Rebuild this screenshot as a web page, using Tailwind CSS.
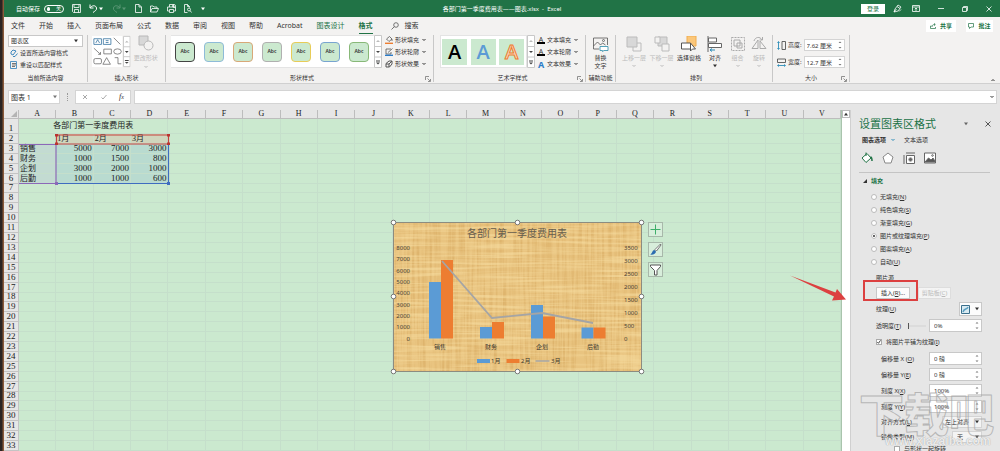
<!DOCTYPE html>
<html lang="zh-CN">
<head>
<meta charset="utf-8">
<title>各部门第一季度费用表——图表.xlsx - Excel</title>
<script src="https://cdn.jsdelivr.net/npm/@tailwindcss/browser@4"></script>
</head>
<body class="bg-[#e6e6e6] font-['Noto_Sans','Noto_Sans_CJK_SC',sans-serif] text-[6px] leading-none text-[#333]">
<svg width="0" height="0" class="absolute" aria-hidden="true">
  <symbol id="down" viewBox="0 0 6 4"><path d="M1.500 1L3 2.500 4.500 1" fill="none" stroke="currentColor"/></symbol>
  <symbol id="tri" viewBox="0 0 6 4"><path d="M1 .5h4L3 3.200z" fill="currentColor"/></symbol>
  <symbol id="spin" viewBox="0 0 6 11"><path d="M1.500 3.500L3 2l1.500 1.500zM1.500 7.500L3 9l1.500-1.500z" fill="#777"/></symbol>
  <symbol id="launch" viewBox="0 0 6 6"><path d="M.5 4V.5H4M2.500 2.500L5 5M5.500 3v2.500H3" fill="none" stroke="#777" stroke-width=".8"/></symbol>
  <symbol id="gal" viewBox="0 0 8 33"><path d="M.5.500h7v32h-7zM.5 11.500h7M.5 22h7" fill="#fff" stroke="#c8c8c8"/><path d="M2 7L4 5l2 2z" fill="#bbb"/><path d="M2 16h4l-2 2zM2 27.500h4l-2 2zM2 25.500h4v1H2z" fill="#444"/></symbol>
</svg>

<div class="flex h-screen w-full overflow-hidden">
  <div class="w-1 shrink-0 bg-linear-to-r from-[#2a2422] from-40% to-[#a5683f]"></div>
  <div class="flex min-w-0 flex-1 flex-col">

    <header class="flex h-[17px] shrink-0 items-center bg-[#217346] text-white">
      <div class="flex flex-1 items-center gap-2">
        <label for="autosave" class="-mr-1 ml-3">自动保存</label>
        <button id="autosave" role="switch" aria-checked="false" class="flex h-2 w-5 items-center gap-0.5 rounded-full border border-white px-0.5"><span class="size-1 rounded-full bg-white"></span><span class="ml-1 text-[5px]">关</span></button>
        <button aria-label="保存"><svg class="size-[9px]" viewBox="0 0 9 9" fill="none" stroke="#fff" stroke-width=".8"><path d="M.5.500h8v8h-7l-1-1zM2 .5v3h5v-3M2.500 8.500v-3h4v3"/></svg></button>
        <button aria-label="撤消" class="flex items-center"><svg class="size-[9px]" viewBox="0 0 9 9" fill="none" stroke="#fff"><path d="M1 .5v3.500h3.500M1 4C3 1 7 1 7.500 4 8 6 6 7 4 8.500"/></svg><svg class="h-1 w-1.5"><use href="#tri"/></svg></button>
        <button aria-label="恢复" class="flex items-center opacity-25"><svg class="size-[9px]" viewBox="0 0 9 9" fill="none" stroke="#fff"><path d="M8 .5v3.500H4.500M8 4C6 1 2 1 1.500 4 1 6 3 7 5 8.500"/></svg><svg class="h-1 w-1.5"><use href="#tri"/></svg></button>
        <button aria-label="新建"><svg class="h-[9px] w-[7px]" viewBox="0 0 7 9" fill="none" stroke="#fff" stroke-width=".8"><path d="M.5.500H4l2.500 2.500v5.500h-6zM4 .5V3h2.500"/></svg></button>
        <button aria-label="打开"><svg class="h-[8px] w-[9px]" viewBox="0 0 9 8" fill="none" stroke="#fff" stroke-width=".8"><path d="M.5 7V1h2.500l1 1h3v1.500M.5 7l1.500-3.500h6.500L7 7z"/></svg></button>
        <button aria-label="打印"><svg class="size-[9px]" viewBox="0 0 9 9" fill="none" stroke="#fff" stroke-width=".8"><path d="M2.500 3V.5h4V3M2 7H.5V3h8v4H7M2.500 5.500h4v3h-4z"/><circle cx="7" cy="2" r="1.500"/></svg></button>
        <button aria-label="打印预览"><svg class="h-[9px] w-[8px]" viewBox="0 0 8 9" fill="none" stroke="#fff" stroke-width=".8"><path d="M5.500 3.500v-1l-2-2h-3v8h3M3.500.500v2h2"/><circle cx="5" cy="5.500" r="1.500"/><path d="M6 6.500L7.500 8.500"/></svg></button>
        <button aria-label="自定义快速访问工具栏"><svg class="h-1 w-1.5"><use href="#tri"/></svg></button>
      </div>
      <h1 class="text-[6px]">各部门第一季度费用表——图表.xlsx&nbsp; - &nbsp;Excel</h1>
      <div class="flex flex-1 items-center justify-end">
        <button class="mr-2 h-2.5 w-6 bg-white text-[6px] text-[#217346]">登录</button>
        <button aria-label="墨迹" class="mr-2.5"><svg class="size-[9px]" viewBox="0 0 9 9" fill="none" stroke="#fff" stroke-width=".8"><path d="M1 8l1-3 3-4 3 2-3 4zM4 2.500l3 2M1 8l2.500-3M6 7.500l2-2"/></svg></button>
        <button aria-label="功能区显示选项" class="mr-4.5"><svg class="h-[7px] w-[8px]" viewBox="0 0 8 7" fill="none" stroke="#fff" stroke-width=".8"><path d="M.5.500h7v6h-7zM.5 2h7M4 6V3M2.800 4.200L4 3l1.200 1.200"/></svg></button>
        <button aria-label="最小化" class="mr-4.5"><svg class="h-[7px] w-[6px]" viewBox="0 0 6 7"><path d="M0 3.500h6" stroke="#fff" stroke-width=".8"/></svg></button>
        <button aria-label="还原" class="mr-4.5"><svg class="size-[6px]" viewBox="0 0 6 6" fill="none" stroke="#fff" stroke-width=".8"><path d="M.5 1.500h4v4h-4zM1.500 1.500v-1h4v4h-1"/></svg></button>
        <button aria-label="关闭" class="mr-2"><svg class="size-[6px]" viewBox="0 0 6 6" stroke="#fff" stroke-width=".8"><path d="M.5.500l5 5M5.500.500l-5 5"/></svg></button>
      </div>
    </header>

    <nav class="flex h-[17px] shrink-0 items-center gap-3.5 bg-[#f3f2f1] pr-[7px] pl-[7px] text-[7px]">
      <button>文件</button><button>开始</button><button>插入</button><button>页面布局</button><button>公式</button><button>数据</button><button>审阅</button><button>视图</button><button>帮助</button><button>Acrobat</button><button class="text-[#217346]">图表设计</button>
      <button class="mt-[5px] border-b border-[#217346] pb-1 font-bold text-[#217346]">格式</button>
      <button class="ml-1 flex items-center gap-1.5"><svg class="size-2" viewBox="0 0 8 8" fill="none" stroke="#555" stroke-width=".8"><circle cx="5" cy="3" r="2.300"/><path d="M3.300 4.700L.5 7.500"/></svg>搜索</button>
      <span class="flex-1"></span>
      <button class="-mr-1 flex h-3 w-[30px] items-center justify-center gap-1 bg-white text-[6px] font-bold text-[#217346]"><svg class="size-1.5" viewBox="0 0 6 6" fill="none" stroke="#217346" stroke-width=".7"><path d="M1.500 3h-1v2.500h5V4M2 4c0-2 1-2.500 3-2.500M4 .3l1.300 1.200L4 2.700"/></svg>共享</button>
      <button class="flex h-3 w-[27px] items-center justify-center gap-1 bg-white text-[6px] font-bold text-[#217346]"><svg class="size-1.5" viewBox="0 0 6 6" fill="none" stroke="#217346" stroke-width=".7"><path d="M.5.500h5v3.500H3L1.500 5.500V4h-1z"/></svg>批注</button>
    </nav>

    <section aria-label="格式" class="flex h-[50px] shrink-0 border-b border-[#d0d0d0] bg-[#f3f2f1] py-px">
      <div class="flex w-[84px] flex-col border-r border-[#c8c8c8] px-1">
        <div class="flex flex-1 flex-col gap-0.5">
          <div class="relative"><select aria-label="图表元素" class="block h-3 w-full appearance-none border border-[#c8c8c8] bg-white pl-0.5"><option>图表区</option></select><svg class="absolute top-1 right-1 h-1 w-1.5"><use href="#tri"/></svg></div>
          <div class="flex flex-col gap-1 pl-0.5">
          <button class="flex items-center gap-0.5"><svg class="size-2" viewBox="0 0 8 8" fill="none" stroke="#2b7cb8" stroke-width=".9"><path d="M1 3l2-2 3 1-3 4-2-1zM3 7.500h2l2.500-3"/></svg>设置所选内容格式</button>
          <button class="flex items-center gap-0.5"><svg class="size-2" viewBox="0 0 8 8" fill="none" stroke="#2b7cb8" stroke-width=".8"><path d="M.5.500h6v7h-6z"/><path d="M2 2.500h4M2 4h4M2 5.500h3" stroke="#555"/></svg>重设以匹配样式</button>
          </div>
        </div>
        <p class="pb-px text-center">当前所选内容</p>
      </div>
      <div class="flex w-[78px] flex-col border-r border-[#c8c8c8] px-1">
        <div class="flex flex-1 items-start">
          <svg class="h-[33px] w-[33px]" viewBox="0 0 33 33" fill="none" stroke="#666" stroke-width=".8"><path d="M0 0h32v33H0z" fill="#fff" stroke="none"/><g stroke="#2b6c9c"><path d="M2 3h8v6H2zM12 3h8v6h-8zM4 7.500L6 4l2 3.500M14.500 5h3M14.500 7h3"/></g><path d="M23 2l7 7M2 13l7 6.500M9 17v2.500H6.500M12.500 14h8v5h-8zM11.500 30l4-7 4 7zM24 23h3.500v6.500H31"/><ellipse cx="27" cy="16.500" rx="4" ry="2.800"/><rect x="2" y="24" width="8" height="5.500" rx="1.500"/></svg>
          <svg class="h-[33px] w-2"><use href="#gal"/></svg>
          <button class="flex w-8 flex-col items-center gap-1 text-[#bbb]" disabled><svg class="size-4" viewBox="0 0 16 16" fill="#d8d8d8" stroke="#b8b8b8"><path d="M1 1h9v9H1z"/><circle cx="10.500" cy="10.500" r="4.500" fill="#f3f2f1"/></svg>更改形状<svg class="h-1 w-1.5"><use href="#down"/></svg></button>
        </div>
        <p class="pb-px text-center">插入形状</p>
      </div>
      <div class="relative flex w-[268px] flex-col border-r border-[#c8c8c8] pl-[5px]">
        <div class="flex flex-1 items-start">
          <div id="styles" class="flex h-[33px] w-[203px] items-center justify-between border-y border-[#e4e4e4] bg-white px-1 pr-[5px]"></div>
          <svg class="h-[33px] w-2"><use href="#gal"/></svg>
          <div class="flex flex-col gap-1 pt-px pl-[3px]">
            <button class="flex items-center gap-0.5"><svg class="size-2" viewBox="0 0 8 8" fill="none" stroke="#555" stroke-width=".8"><path d="M1.500 3l3-2.500L7 3 4 5.500zM7 3v2"/><path d="M0 7.300h8" stroke="#ed7d31" stroke-width="1.400"/></svg>形状填充<svg class="h-1 w-1.5"><use href="#down"/></svg></button>
            <button class="flex items-center gap-0.5"><svg class="size-2" viewBox="0 0 8 8" fill="none" stroke="#555" stroke-width=".8"><path d="M6 1H1v5h5V4M3 4.500L7.500.500"/><path d="M0 7.300h8" stroke="#2b7cc8" stroke-width="1.400"/></svg>形状轮廓<svg class="h-1 w-1.5"><use href="#down"/></svg></button>
            <button class="flex items-center gap-0.5"><svg class="size-2" viewBox="0 0 8 8" fill="none" stroke="#555"><path d="M1 3.500L4 1h3v3L4.500 7H1z"/><path d="M1 4h3v3M4 4l3-3"/></svg>形状效果<svg class="h-1 w-1.5"><use href="#down"/></svg></button>
          </div>
        </div>
        <p class="pb-px text-center">形状样式</p>
        <button aria-label="设置形状格式" class="absolute right-0.5 bottom-0"><svg class="size-1.5"><use href="#launch"/></svg></button>
      </div>
      <div class="relative flex w-[152px] flex-col border-r border-[#c8c8c8] pl-[6px]">
        <div class="flex flex-1 items-start">
          <div class="flex h-[33px] w-[87px] items-center justify-between border border-[#e4e4e4] bg-white px-px pr-0.5 font-['Open_Sans',sans-serif] text-[20px]">
            <button class="h-[26px] w-[25px] bg-[#cbe9cf] font-semibold text-black">A</button>
            <button class="h-[26px] w-[25px] bg-[#cbe9cf] font-semibold text-[#5b9bd5]">A</button>
            <button class="h-[26px] w-[25px] bg-[#cbe9cf] font-semibold text-[#fbd9c0] [-webkit-text-stroke:1px_#ed7d31]">A</button>
          </div>
          <svg class="h-[33px] w-2"><use href="#gal"/></svg>
          <div class="flex flex-col gap-1 pt-px pl-0.5">
            <button class="flex items-center gap-0.5"><span class="flex h-2 w-2 items-center justify-center border-b-2 border-black text-[7px]">A</span>文本填充<svg class="h-1 w-1.5"><use href="#down"/></svg></button>
            <button class="flex items-center gap-0.5"><span class="flex h-2 w-2 items-center justify-center border-b-2 border-black text-[7px]">A</span>文本轮廓<svg class="h-1 w-1.5"><use href="#down"/></svg></button>
            <button class="flex items-center gap-0.5"><span class="flex h-2 w-2 items-center justify-center text-[9px] font-bold text-[#2b7cc8]">A</span>文本效果<svg class="h-1 w-1.5"><use href="#down"/></svg></button>
          </div>
        </div>
        <p class="pb-px text-center">艺术字样式</p>
        <button aria-label="设置文本格式" class="absolute right-0.5 bottom-0"><svg class="size-1.5"><use href="#launch"/></svg></button>
      </div>
      <div class="flex w-[30px] flex-col border-r border-[#c8c8c8]">
        <button class="flex flex-1 flex-col items-center gap-0.5 pt-0.5 leading-[8px]"><svg class="h-[15px] w-4" viewBox="0 0 16 15" fill="none" stroke="#555" stroke-width=".8"><path d="M14.500 8V1H.5v11H6M.5 9l4-4 3 3 2-2 3 2"/><circle cx="10.500" cy="3.500" r="1"/><path d="M7 9.500h8v4h-4L9.500 14.500v-1H7z" stroke="#2b8ca8" fill="#fff"/></svg><span>替换<br>文字</span></button>
        <p class="pb-px text-center">辅助功能</p>
      </div>
      <div class="flex w-[157px] flex-col border-r border-[#c8c8c8] pl-1">
        <div class="flex flex-1 items-start pt-px">
          <button disabled class="flex w-7 flex-col items-center gap-[3px] whitespace-nowrap text-[#bbb]"><svg class="size-4" viewBox="0 0 16 16" fill="#f3f2f1" stroke="#bbb"><path d="M7 7h8v8H7z"/><path d="M1 1h10v10H1z" fill="#d8d8d8"/></svg>上移一层<svg class="h-1 w-1.5"><use href="#down"/></svg></button>
          <button disabled class="flex w-[27px] flex-col items-center gap-[3px] whitespace-nowrap text-[#bbb]"><svg class="size-4" viewBox="0 0 16 16" fill="#d8d8d8" stroke="#bbb"><path d="M4 1h9v9H4z"/><path d="M1 1h5v6H1zM8 8h7v7H8z" fill="#f3f2f1"/></svg>下移一层<svg class="h-1 w-1.5"><use href="#down"/></svg></button>
          <button class="flex w-7 flex-col items-center gap-[3px] whitespace-nowrap"><svg class="size-4" viewBox="0 0 16 16" fill="#fff" stroke="#555"><path d="M6 0h9v10H6z" fill="#fbc77a" stroke="#f0ad50"/><path d="M.5 7h9v6h-9z"/><path d="M9.500 7v8l2-2h3z"/></svg>选择窗格</button>
          <button class="flex w-6 flex-col items-center gap-[3px]"><svg class="size-4" viewBox="0 0 16 16" fill="#fff" stroke="#666"><path d="M1 0v16M1.500 2h8v4h-8zM1.500 7.500h13v4h-13z"/><path d="M8 14H3M5 12.500L3 14l2 1.500" fill="none" stroke="#2b8cb8"/></svg>对齐<svg class="h-1 w-1.5"><use href="#tri"/></svg></button>
          <button disabled class="flex w-[21px] flex-col items-center gap-[3px] text-[#bbb]"><svg class="size-4" viewBox="0 0 16 16" fill="none" stroke="#aaa"><path d="M1.500 1.500h13v13h-13z" stroke-dasharray="2 1"/><path d="M4 4h6v6H4zM7 7h5v5H7z"/></svg>组合<svg class="h-1 w-1.5"><use href="#down"/></svg></button>
          <button disabled class="flex w-[22px] flex-col items-center gap-[3px] text-[#bbb]"><svg class="size-4" viewBox="0 0 16 16" fill="none" stroke="#aaa"><path d="M1 12.500L7 4v8.500zM9 5l6 7.500H9zM3 5c1-4 6-5 8-1M11.500 1v3h-3"/></svg>旋转<svg class="h-1 w-1.5"><use href="#down"/></svg></button>
        </div>
        <p class="pb-px text-center">排列</p>
      </div>
      <div class="relative flex w-[77px] flex-col border-r border-[#c8c8c8] px-1">
        <div class="flex flex-1 flex-col gap-[5px] pt-1">
          <div class="flex items-center gap-0.5"><svg class="size-[9px]" viewBox="0 0 9 9" fill="none" stroke="#555" stroke-width=".9"><path d="M5 .5h3.500v8H5z"/><path d="M1.500 1v7M.5 2l1-1.500 1 1.500M.5 7l1 1.500 1-1.500" stroke="#2b8cb8"/></svg><label for="h">高度:</label><div class="relative flex-1"><input id="h" value="7.62 厘米" class="block h-3 w-full border border-[#d4d4d4] bg-white pl-0.5"><svg class="absolute top-0 right-0.5 h-3 w-1.5"><use href="#spin"/></svg></div></div>
          <div class="flex items-center gap-0.5"><svg class="size-[9px]" viewBox="0 0 9 9" fill="none" stroke="#555" stroke-width=".9"><path d="M.5 1h8v3.500h-8z"/><path d="M1 7.500h7M2 6.500l-1.500 1 1.500 1M7 6.500l1.500 1-1.500 1" stroke="#2b8cb8"/></svg><label for="w">宽度:</label><div class="relative flex-1"><input id="w" value="12.7 厘米" class="block h-3 w-full border border-[#d4d4d4] bg-white pl-0.5"><svg class="absolute top-0 right-0.5 h-3 w-1.5"><use href="#spin"/></svg></div></div>
        </div>
        <p class="pb-px text-center">大小</p>
        <button aria-label="大小和属性" class="absolute right-0.5 bottom-0"><svg class="size-1.5"><use href="#launch"/></svg></button>
      </div>
      <div class="flex flex-1 items-end justify-end pr-1"><button aria-label="折叠功能区"><svg class="h-1 w-1.5 rotate-180"><use href="#down"/></svg></button></div>
    </section>

    <div class="flex h-[26px] shrink-0 items-center pr-[3px] pl-1">
      <div class="relative w-[52px]"><input aria-label="名称框" value="图表 1" class="block h-3.5 w-full border border-[#d4d4d4] bg-white pl-0.5 text-[7px]"><svg class="absolute top-[5px] right-0.5 h-1 w-1.5 text-[#777]"><use href="#tri"/></svg></div>
      <span class="mx-[7px] h-2 border-l border-dotted border-[#999]"></span>
      <div class="mr-[3px] flex h-3.5 w-[56px] items-center justify-around border border-[#d4d4d4] bg-white">
        <button aria-label="取消"><svg class="size-1.5" viewBox="0 0 6 6" stroke="#aaa"><path d="M1 1l4 4M5 1L1 5"/></svg></button>
        <button aria-label="输入"><svg class="size-1.5" viewBox="0 0 6 6" fill="none" stroke="#aaa"><path d="M.5 3.500L2 5l3.500-4"/></svg></button>
        <button aria-label="插入函数" class="font-['Liberation_Serif',serif] text-[8px] italic">f<span class="text-[6px]">x</span></button>
      </div>
      <div class="relative flex-1"><input aria-label="编辑栏" class="block h-3.5 w-full border border-[#d4d4d4] bg-white"><svg class="absolute top-[5px] right-0.5 h-1 w-1.5"><use href="#down"/></svg></div>
    </div>

    <div class="flex min-h-0 flex-1">
      <main class="relative flex min-w-0 flex-1 border-r border-[#a9c4ad]">
        <table class="flex w-full flex-col font-['Liberation_Serif','Noto_Sans_CJK_SC',serif] text-[8px] text-[#222]">
          <thead class="block"><tr id="cols" class="grid h-[9px] grid-cols-[15px_repeat(22,minmax(0,1fr))]"></tr></thead>
          <tbody id="rows" class="flex min-h-0 flex-1 flex-col bg-[#cbe9cf]"></tbody>
        </table>

        <svg class="pointer-events-none absolute top-6 left-[15px] h-[52px] w-[152px]" viewBox="0 0 152 52" fill="none" stroke-width="1.200">
          <path d="M0 10.500h37M0 49.500h37" stroke="#8c68b8"/><path d="M37 11v38.500" stroke="#8c68b8"/>
          <path d="M37.500 49.500h112V11" stroke="#3f6cc0"/>
          <path d="M37.500 1h112v9h-112z" stroke="#c8403c"/>
          <path d="M36 0h3v2.500h-3zM148 0h3v2.500h-3zM36 8.500h3V11h-3zM148 8.500h3V11h-3z" fill="#b83430"/>
          <path d="M36 48h3v3h-3z" fill="#8c68b8"/><path d="M148 48h3v3h-3z" fill="#3f6cc0"/>
        </svg>

        <figure class="absolute top-[108px] left-[385px] h-[157px] w-[257px]">
          <svg class="size-full" viewBox="389 218 257 157" font-family="'Noto Sans','Noto Sans CJK SC',sans-serif" font-size="6" fill="#4a4236" role="img" aria-label="各部门第一季度费用表">
            <defs>
              <filter id="warp" x="0" y="0" width="100%" height="100%" color-interpolation-filters="sRGB"><feTurbulence type="fractalNoise" baseFrequency=".4 .015" numOctaves="2" seed="4"/><feColorMatrix values="0 0 0 0 .8  0 0 0 0 .6  0 0 0 0 .3  3 0 0 0 -1.200"/></filter>
              <filter id="weft" x="0" y="0" width="100%" height="100%" color-interpolation-filters="sRGB"><feTurbulence type="fractalNoise" baseFrequency=".015 .4" numOctaves="2" seed="9"/><feColorMatrix values="0 0 0 0 .98  0 0 0 0 .89  0 0 0 0 .66  3 0 0 0 -1.200"/></filter>
            </defs>
            <rect x="393" y="222.500" width="249" height="149" fill="#e9c480"/>
            <rect x="393" y="222.500" width="249" height="149" filter="url(#warp)" opacity=".35"/>
            <rect x="393" y="222.500" width="249" height="149" filter="url(#weft)" opacity=".5"/>
            <rect x="393.500" y="222.500" width="248" height="149" fill="none" stroke="#8c8c80"/>
            <text x="517" y="237" font-size="10" text-anchor="middle" fill="#665d4e">各部门第一季度费用表</text>
            <g text-anchor="end"><text x="410" y="250">8000</text><text x="410" y="261">7000</text><text x="410" y="273">6000</text><text x="410" y="284">5000</text><text x="410" y="295">4000</text><text x="410" y="307">3000</text><text x="410" y="318">2000</text><text x="410" y="329">1000</text><text x="410" y="341">0</text></g>
            <g><text x="624" y="250">3500</text><text x="624" y="263">3000</text><text x="624" y="276">2500</text><text x="624" y="289">2000</text><text x="624" y="302">1500</text><text x="624" y="315">1000</text><text x="624" y="328">500</text><text x="624" y="341">0</text></g>
            <path fill="#5b9bd5" d="M429 282h12v56.500h-12zM480 327h12v11.500h-12zM531 305h12v33.500h-12zM581.500 327.500h12v11h-12z"/>
            <path fill="#ed7d31" d="M441 260h12v78.500h-12zM492 322h12v16.500h-12zM543 316.500h12v22h-12zM593.500 327.500h12v11h-12z"/>
            <path d="M442 261l50 57 50-5 51 10" fill="none" stroke="#a5a5a5" stroke-width="1.800"/>
            <g text-anchor="middle" fill="#3e382e"><text x="440" y="349">销售</text><text x="491" y="349">财务</text><text x="542" y="349">企划</text><text x="593" y="349">后勤</text></g>
            <path fill="#5b9bd5" d="M477 359h13v4h-13z"/><path fill="#ed7d31" d="M506.500 359h13v4h-13z"/><path d="M535.500 361h14" stroke="#a5a5a5" stroke-width="1.500"/>
            <g fill="#3e382e"><text x="491" y="363">1月</text><text x="521" y="363">2月</text><text x="551" y="363">3月</text></g>
            <g fill="#fff" stroke="#777"><circle cx="393.500" cy="222.500" r="2.300"/><circle cx="517.500" cy="222.500" r="2.300"/><circle cx="641.500" cy="222.500" r="2.300"/><circle cx="393.500" cy="296.500" r="2.300"/><circle cx="641.500" cy="296.500" r="2.300"/><circle cx="393.500" cy="371.500" r="2.300"/><circle cx="517.500" cy="371.500" r="2.300"/><circle cx="641.500" cy="371.500" r="2.300"/></g>
          </svg>
        </figure>
        <div class="absolute top-[112px] left-[644px] flex flex-col gap-[5px]">
          <button aria-label="图表元素" class="size-[15px] border border-[#a8b8aa] bg-[#d8eedb]"><svg viewBox="0 0 13 13" stroke="#3fae6a"><path d="M6.500 1.500v10M1.500 6.500h10"/></svg></button>
          <button aria-label="图表样式" class="size-[15px] border border-[#a8b8aa] bg-[#d8eedb]"><svg viewBox="0 0 13 13"><path d="M11.500 1L6 6.500l1.500 1.500L12 2z" fill="#fff" stroke="#555" stroke-width=".8"/><path d="M5.500 7C3 7 4 10 1 11.500c3 .5 6-.5 6-3z" fill="#2b6cb0"/></svg></button>
          <button aria-label="图表筛选器" class="size-[15px] border border-[#a8b8aa] bg-[#d8eedb]"><svg viewBox="0 0 13 13" fill="#fff" stroke="#555"><path d="M1.500 2h10v1.500L8 7.500V12H5.500V7.500l-4-4z"/></svg></button>
        </div>
      </main>

      <div class="flex w-2 flex-col items-center bg-[#e6e6e6]" aria-hidden="true"><span class="flex h-2 w-full items-center justify-center border border-[#bbb] bg-white"><svg class="h-1 w-1.5 rotate-180"><use href="#tri"/></svg></span><span class="w-full flex-1 bg-white"></span></div>

      <aside class="relative w-[150px] shrink-0 border-l border-[#d0d0d0] bg-[#e6e6e6] pr-2.5 pl-2">
        <div class="flex items-center pt-2"><h2 class="flex-1 text-[11px] text-[#217346]">设置图表区格式</h2><button aria-label="任务窗格选项" class="mr-4"><svg class="h-1 w-1.5 text-[#666]"><use href="#tri"/></svg></button><button aria-label="关闭窗格" class="-mr-px"><svg class="size-1.5" viewBox="0 0 6 6" stroke="#555"><path d="M.5.500l5 5M5.500.500l-5 5"/></svg></button></div>
        <div class="flex items-center gap-2 pt-2 pl-[3px]"><button class="flex items-center gap-1 font-bold">图表选项<svg class="h-1 w-1.5 text-[#2b8cb8]"><use href="#down"/></svg></button><button>文本选项</button></div>
        <div class="flex h-[30px] items-center gap-[9px] border-b border-[#c4c4c4] pl-0.5">
          <button aria-label="填充与线条"><svg class="size-3" viewBox="0 0 12 12" fill="#fff" stroke="#217346"><path d="M1 6l5-4.500L10 6l-5 4.500zM5 4V.5"/><path d="M9.500 5c1.500 0 1.500 2 1.500 4" fill="none" stroke-width="1.500"/></svg></button>
          <button aria-label="效果"><svg class="size-3" viewBox="0 0 12 12" fill="#fff" stroke="#888"><path d="M6 1l5 4-2 6H3L1 5z"/></svg></button>
          <button aria-label="大小与属性"><svg class="size-3" viewBox="0 0 12 12" fill="#fff" stroke="#666"><path d="M3.500 3.500h8v8h-8zM1 3v9M3 1h9"/><path d="M5.500 7.500h4M7.500 5.500v4" stroke-width="2"/></svg></button>
          <button aria-label="图片"><svg class="size-3" viewBox="0 0 12 12" fill="#fff" stroke="#666"><path d="M.5 1h11v10H.5z"/><path d="M1 10l3.500-4L7 8l2-2 2.500 4z" fill="#555"/><circle cx="8.500" cy="3.500" r=".8"/></svg></button>
        </div>
        <h3 class="flex items-center gap-1 pt-[5px] pl-1 font-bold text-[#217346]"><svg class="size-1" viewBox="0 0 4 4"><path d="M4 0v4H0z" fill="#333"/></svg>填充</h3>
        <div class="flex flex-col gap-[7px] pt-[10px] pl-3">
          <label class="flex items-center gap-[3px]"><input type="radio" name="fill" class="size-1.5 appearance-none rounded-full border border-[#bbb] bg-white"><span>无填充(<u>N</u>)</span></label>
          <label class="flex items-center gap-[3px]"><input type="radio" name="fill" class="size-1.5 appearance-none rounded-full border border-[#bbb] bg-white"><span>纯色填充(<u>S</u>)</span></label>
          <label class="flex items-center gap-[3px]"><input type="radio" name="fill" class="size-1.5 appearance-none rounded-full border border-[#bbb] bg-white"><span>渐变填充(<u>G</u>)</span></label>
          <label class="flex items-center gap-[3px]"><input type="radio" name="fill" checked class="size-1.5 appearance-none rounded-full border-2 border-white bg-[#333] outline outline-[#bbb] -outline-offset-1"><span>图片或纹理填充(<u>P</u>)</span></label>
          <label class="flex items-center gap-[3px]"><input type="radio" name="fill" class="size-1.5 appearance-none rounded-full border border-[#bbb] bg-white"><span>图案填充(<u>A</u>)</span></label>
          <label class="flex items-center gap-[3px]"><input type="radio" name="fill" class="size-1.5 appearance-none rounded-full border border-[#bbb] bg-white"><span>自动(<u>U</u>)</span></label>
        </div>
        <div class="relative flex flex-col gap-[3px] pt-[10px] pr-2 pl-[17px]">
          <p>图片源</p>
          <div class="mt-[3px] flex gap-2"><button class="h-3 w-[34px] border border-[#c8c8c8] bg-[#fcfcfc]">插入(<u>R</u>)...</button><button disabled class="h-3 w-[33px] border border-[#ddd] bg-[#f4f4f4] text-[#bbb]">剪贴板(<u>C</u>)</button></div>
          <div class="flex items-center justify-between"><span>纹理(<u>U</u>)</span><button aria-label="纹理" class="flex h-3.5 w-[23px] items-center justify-center gap-1 border border-[#c8c8c8] bg-[#fcfcfc]"><svg class="size-[9px]" viewBox="0 0 9 9"><path d="M.5.500h8v8h-8z" fill="#d8eaf2" stroke="#3a6f8c"/><path d="M2 7C3 3 6 5 7 2" fill="none" stroke="#5a9fc0" stroke-width="1.500"/></svg><svg class="h-1 w-1.5"><use href="#tri"/></svg></button></div>
          <div class="flex items-center"><label for="alpha" class="flex-1">透明度(<u>T</u>)</label><input type="range" value="0" aria-label="透明度" class="mr-[3px] h-1.5 w-[18px] appearance-none bg-linear-to-b from-transparent from-40% via-[#aaa] via-50% to-transparent to-60% [&::-webkit-slider-thumb]:h-1.5 [&::-webkit-slider-thumb]:w-px [&::-webkit-slider-thumb]:appearance-none [&::-webkit-slider-thumb]:bg-[#555]"><div class="relative w-[53px]"><input id="alpha" value="0%" class="block h-[13px] w-full border border-[#c8c8c8] bg-white pl-1"><svg class="absolute top-px right-0.5 h-[11px] w-1.5"><use href="#spin"/></svg></div></div>
          <label class="my-1 flex items-center gap-1"><input type="checkbox" checked class="peer size-1.5 appearance-none border border-[#aaa] bg-white"><svg class="-ml-2.5 hidden size-1.5 peer-checked:block" viewBox="0 0 6 6" fill="none" stroke="#333" stroke-width=".9"><path d="M1.300 3L2.500 4.300l2-3"/></svg><span>将图片平铺为纹理(<u>I</u>)</span></label>
          <div class="flex items-center pl-[5px]"><label for="ox" class="flex-1">偏移量 X (<u>O</u>)</label><div class="relative w-[53px]"><input id="ox" value="0 磅" class="block h-[13px] w-full border border-[#c8c8c8] bg-white pl-1"><svg class="absolute top-px right-0.5 h-[11px] w-1.5"><use href="#spin"/></svg></div></div>
          <div class="flex items-center pl-[5px]"><label for="oy" class="flex-1">偏移量 Y(<u>E</u>)</label><div class="relative w-[53px]"><input id="oy" value="0 磅" class="block h-[13px] w-full border border-[#c8c8c8] bg-white pl-1"><svg class="absolute top-px right-0.5 h-[11px] w-1.5"><use href="#spin"/></svg></div></div>
          <div class="flex items-center pl-[5px]"><label for="sx" class="flex-1">刻度 X(<u>X</u>)</label><div class="relative w-[53px]"><input id="sx" value="100%" class="block h-[13px] w-full border border-[#c8c8c8] bg-white pl-1"><svg class="absolute top-px right-0.5 h-[11px] w-1.5"><use href="#spin"/></svg></div></div>
          <div class="flex items-center pl-[5px]"><label for="sy" class="flex-1">刻度 Y(<u>Y</u>)</label><div class="relative w-[53px]"><input id="sy" value="100%" class="block h-[13px] w-full border border-[#c8c8c8] bg-white pl-1"><svg class="absolute top-px right-0.5 h-[11px] w-1.5"><use href="#spin"/></svg></div></div>
          <div class="flex items-center pl-[5px]"><label for="al" class="flex-1">对齐方式(<u>L</u>)</label><div class="relative w-[40px]"><select id="al" class="block h-3 w-full appearance-none border border-[#d4d4d4] bg-[#f4f4f4] pl-0.5"><option>左上对齐</option></select><svg class="absolute top-1 right-0.5 h-1 w-1.5"><use href="#tri"/></svg></div></div>
          <div class="flex items-center pl-[5px]"><label for="mi" class="flex-1">镜像类型(<u>M</u>)</label><div class="relative w-[30px]"><select id="mi" class="block h-3 w-full appearance-none border border-[#d4d4d4] bg-[#f4f4f4] pl-1"><option>无</option></select><svg class="absolute top-1 right-0.5 h-1 w-1.5"><use href="#tri"/></svg></div></div>
          <label class="flex items-center gap-1 pl-[18px]"><input type="checkbox" class="size-1.5 appearance-none border border-[#aaa] bg-white"><span>与形状一起旋转</span></label>
          <span class="pointer-events-none absolute top-[15px] left-1 h-[21px] w-[55px] border-2 border-[#dc4040]"></span>
        </div>
        <svg class="pointer-events-none absolute top-[163px] -left-[62px] h-8 w-[60px]" viewBox="0 0 60 32" aria-hidden="true"><path d="M1 2.500l44 21-2 4 14-1-9-10.500-1.500 3.500z" fill="#dc4040"/></svg>
        <div class="pointer-events-none absolute top-[282px] left-2 text-[45px] leading-none font-black whitespace-nowrap text-transparent [-webkit-text-stroke:1px_#a0a0a0b0]">下载吧</div>
        <div class="pointer-events-none absolute top-[325px] left-[34px] font-['Liberation_Sans',sans-serif] text-[12px] leading-none font-bold whitespace-nowrap text-white/80 text-shadow-[0_0_1px_#888]">www.xiazaiba.com</div>
      </aside>
    </div>
  </div>
</div>

<script>
const outlines = ['border-[#444]', 'border-[#8ebbd8]', 'border-[#d8a878]', 'border-[#b0b0b0]', 'border-[#e8cc58]', 'border-[#78a4d0]', 'border-[#88b878]'];
document.getElementById('styles').innerHTML = outlines.map(c =>
  `<button class="size-5 rounded-sm border bg-[#cbe9cf] font-semibold text-[5px] ${c}">Abc</button>`).join('');

const letters = 'ABCDEFGHIJKLMNOPQRSTUV'.split('');
document.getElementById('cols').innerHTML =
  '<th class="flex items-end justify-end border-r border-b border-[#bdbdbd] p-px"><svg class="size-1.5" viewBox="0 0 6 6"><path d="M6 0v6H0z" fill="#b4b4b4"/></svg></th>' +
  letters.map(l => `<th scope="col" class="flex items-center justify-center border-r border-b border-[#bdbdbd] font-normal">${l}</th>`).join('');

const data = {
  2: ['', '1月', '2月', '3月'],
  3: ['销售', 5000, 7000, 3000],
  4: ['财务', 1000, 1500, 800],
  5: ['企划', 3000, 2000, 1000],
  6: ['后勤', 1000, 1000, 600]
};
let html = '';
for (let r = 1; r <= 33; r++) {
  html += r === 1
    ? '<tr class="grid h-[15px] shrink-0 grid-cols-[15px_repeat(22,minmax(0,1fr))]">'
    : '<tr class="grid min-h-0 flex-1 grid-cols-[15px_repeat(22,minmax(0,1fr))] grid-rows-[minmax(0,1fr)]">';
  html += `<th scope="row" class="flex items-end justify-center border-r border-b border-[#c4c4c4] bg-[#e6e6e6] text-[9px] leading-[9px] font-normal">${r}</th>`;
  letters.forEach((l, c) => {
    if (r === 1 && c === 0) { html += '<td colspan="4" class="col-span-4 flex items-center justify-center border-r border-b border-[#c5dfcb]">各部门第一季度费用表</td>'; return; }
    if (r === 1 && c < 4) return;
    const v = data[r] && data[r][c] !== undefined ? data[r][c] : '';
    let tone = '';
    if (r === 2 && c > 0 && c < 4) tone = 'bg-[#d0d6bd]';
    if (r > 2 && r < 7 && c === 0) tone = 'bg-[#c3dbd2]';
    if (r > 2 && r < 7 && c > 0 && c < 4) tone = 'bg-[#b9dbd0]';
    html += `<td class="flex items-end border-r border-b border-[#c5dfcb] px-px leading-none whitespace-nowrap ${typeof v === 'number' ? 'justify-end text-[9px]' : ''} ${tone}">${v}</td>`;
  });
  html += '</tr>';
}
document.getElementById('rows').innerHTML = html;
</script>
</body>
</html>
